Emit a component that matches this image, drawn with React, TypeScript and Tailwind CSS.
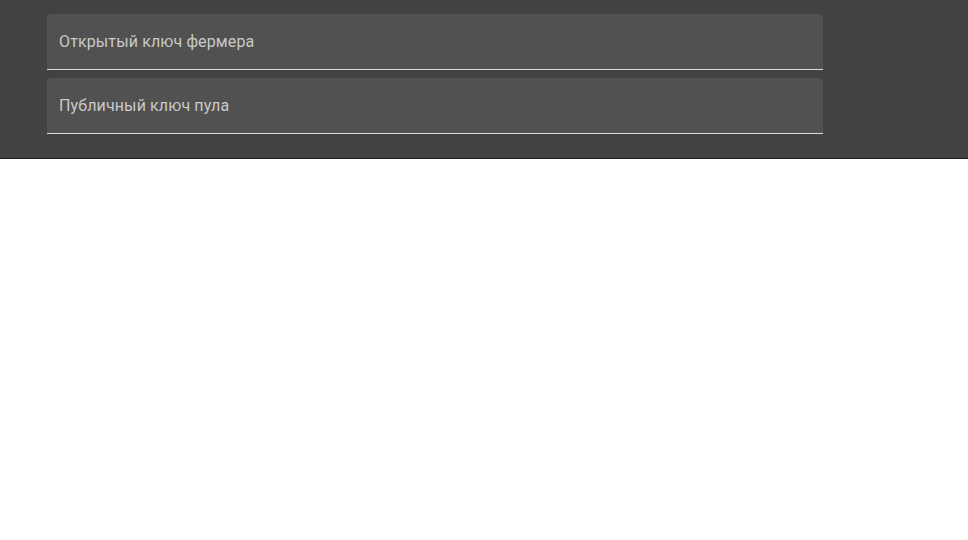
import type { FC } from 'react'

/** Поле у стилі «filled» з підписом усередині. */
const FilledField: FC<{ label: string }> = ({ label }) => (
  <div className="relative h-14 rounded-t bg-[#515151] border-b border-[#dcdcdc]">
    <label className="absolute left-3 top-[19px] text-[16px] leading-[18px] tracking-[0.12px] text-[#c9c9c9]">
      {label}
    </label>
    <input className="h-full w-full bg-transparent px-3 pt-[27px] pb-[10px] text-[16px] text-white outline-none" />
  </div>
)

export default function App() {
  return (
    <div className="min-h-[540px] bg-white font-['Roboto',sans-serif]">
      <div className="bg-[#424242] border-b border-[#1c1c1c] pl-[47px] pt-[14px] pb-[24px]">
        <div className="flex w-[776px] flex-col gap-2">
          <FilledField label="Открытый ключ фермера" />
          <FilledField label="Публичный ключ пула" />
        </div>
      </div>
    </div>
  )
}
